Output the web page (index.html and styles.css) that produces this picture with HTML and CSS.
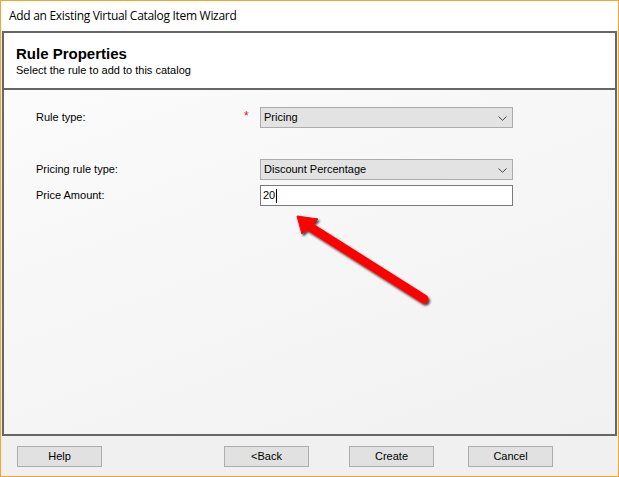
FILE: index.html
```html
<!DOCTYPE html>
<html>
<head>
<meta charset="utf-8">
<link rel="stylesheet" href="styles.css">
</head>
<body>
<div class="window">
  <div class="titlebar">Add an Existing Virtual Catalog Item Wizard</div>
  <div class="panel">
    <div class="header">
      <h1 class="title">Rule Properties</h1>
      <p class="subtitle">Select the rule to add to this catalog</p>
    </div>
    <div class="content">
      <div class="form">
        <div class="row">
          <span class="label">Rule type:</span>
          <span class="req">*</span>
          <div class="select"><span>Pricing</span>
            <svg class="chev" width="9" height="5" viewBox="0 0 9 5"><path d="M0.5 0.5 L4.5 4.3 L8.5 0.5" fill="none" stroke="#444" stroke-width="1"/></svg>
          </div>
        </div>
        <div class="row row-spaced">
          <span class="label">Pricing rule type:</span>
          <span class="req"></span>
          <div class="select"><span>Discount Percentage</span>
            <svg class="chev" width="9" height="5" viewBox="0 0 9 5"><path d="M0.5 0.5 L4.5 4.3 L8.5 0.5" fill="none" stroke="#444" stroke-width="1"/></svg>
          </div>
        </div>
        <div class="row row-tight">
          <span class="label">Price Amount:</span>
          <span class="req"></span>
          <div class="input"><span>20</span><span class="caret"></span></div>
        </div>
      </div>
      <svg class="arrow" width="160" height="110" viewBox="285 205 160 110">
        <defs>
          <filter id="sh" x="-20%" y="-20%" width="150%" height="150%">
            <feDropShadow dx="1.5" dy="2" stdDeviation="1.3" flood-color="#000" flood-opacity="0.75"/>
          </filter>
        </defs>
        <g filter="url(#sh)" fill="#ff0000" stroke="#ff0000">
          <line x1="307" y1="225" x2="424" y2="299" stroke-width="9" stroke-linecap="round"/>
          <polygon points="297,216 318,219 302,234" stroke-width="1" stroke-linejoin="round"/>
        </g>
      </svg>
    </div>
  </div>
  <div class="footer">
    <button class="btn btn-help">Help</button>
    <button class="btn btn-back">&lt;Back</button>
    <button class="btn btn-create">Create</button>
    <button class="btn btn-cancel">Cancel</button>
  </div>
</div>
</body>
</html>
```

FILE: styles.css
```css
* { box-sizing: border-box; }
html, body { margin: 0; padding: 0; background: #ffffff; }

.window {
  width: 619px;
  height: 477px;
  border: 1px solid #f5a42c;
  background: #f0f0f0;
  display: flex;
  flex-direction: column;
  font-family: "Liberation Sans", Arial, sans-serif;
  font-size: 11px;
  color: #000;
}

.titlebar {
  height: 30px;
  line-height: 29px;
  padding-left: 8px;
  background: #ffffff;
  font-family: "Open Sans", "Noto Sans", sans-serif;
  font-size: 12px;
  letter-spacing: -0.3px;
  color: #000;
}

.panel {
  height: 405px;
  margin: 0 1px;
  border: 2px solid #666666;
  display: flex;
  flex-direction: column;
  background: #ffffff;
}

.header {
  height: 57px;
  padding: 12px 0 0 12px;
  border-bottom: 2px solid #666666;
  background: #ffffff;
}

.title {
  margin: 0;
  font-size: 15px;
  line-height: 17px;
  font-weight: bold;
  color: #000;
}

.subtitle {
  margin: 2px 0 0 0;
  font-size: 11px;
  line-height: 13px;
  color: #000;
}

.content {
  flex: 1;
  position: relative;
  background: linear-gradient(160deg, #fbfbfb 0%, #f6f6f6 50%, #f1f1f1 100%);
  padding: 17px 0 0 32px;
}

.form {
  display: flex;
  flex-direction: column;
}

.row {
  display: grid;
  grid-template-columns: 205px 19px 253px;
  grid-template-rows: 21px;
  height: 21px;
  align-items: center;
}

.row-spaced { margin-top: 31px; }
.row-tight { margin-top: 5px; }

.label {
  line-height: 21px;
  height: 21px;
}

.req {
  color: #e0102a;
  font-size: 12px;
  padding-left: 3px;
  line-height: 15px;
  align-self: start;
  padding-top: 2px;
}

.select {
  height: 21px;
  background: #e3e3e3;
  border: 1px solid #acacac;
  display: flex;
  align-items: center;
  justify-content: space-between;
  padding: 0 5px 0 3px;
  line-height: 19px;
}

.chev { display: block; margin-top: 1px; }

.input {
  height: 21px;
  background: #ffffff;
  border: 1px solid #7a7a7a;
  display: flex;
  align-items: center;
  padding-left: 2px;
  line-height: 19px;
}

.caret {
  display: inline-block;
  width: 1px;
  height: 14px;
  background: #000;
  margin-left: 1px;
}

.arrow {
  position: absolute;
  left: 281px;
  top: 115px;
}

.footer {
  flex: 1;
  display: flex;
  align-items: flex-start;
  padding: 10px 0 0 16px;
}

.btn {
  width: 85px;
  height: 21px;
  background: #e1e1e1;
  border: 1px solid #adadad;
  font-family: "Liberation Sans", Arial, sans-serif;
  font-size: 11px;
  line-height: 17px;
  color: #000;
  padding: 0 0 1px 0;
  margin: 0;
}

.btn-back { margin-left: 122px; }
.btn-create { margin-left: 40px; }
.btn-cancel { margin-left: 34px; }
```
